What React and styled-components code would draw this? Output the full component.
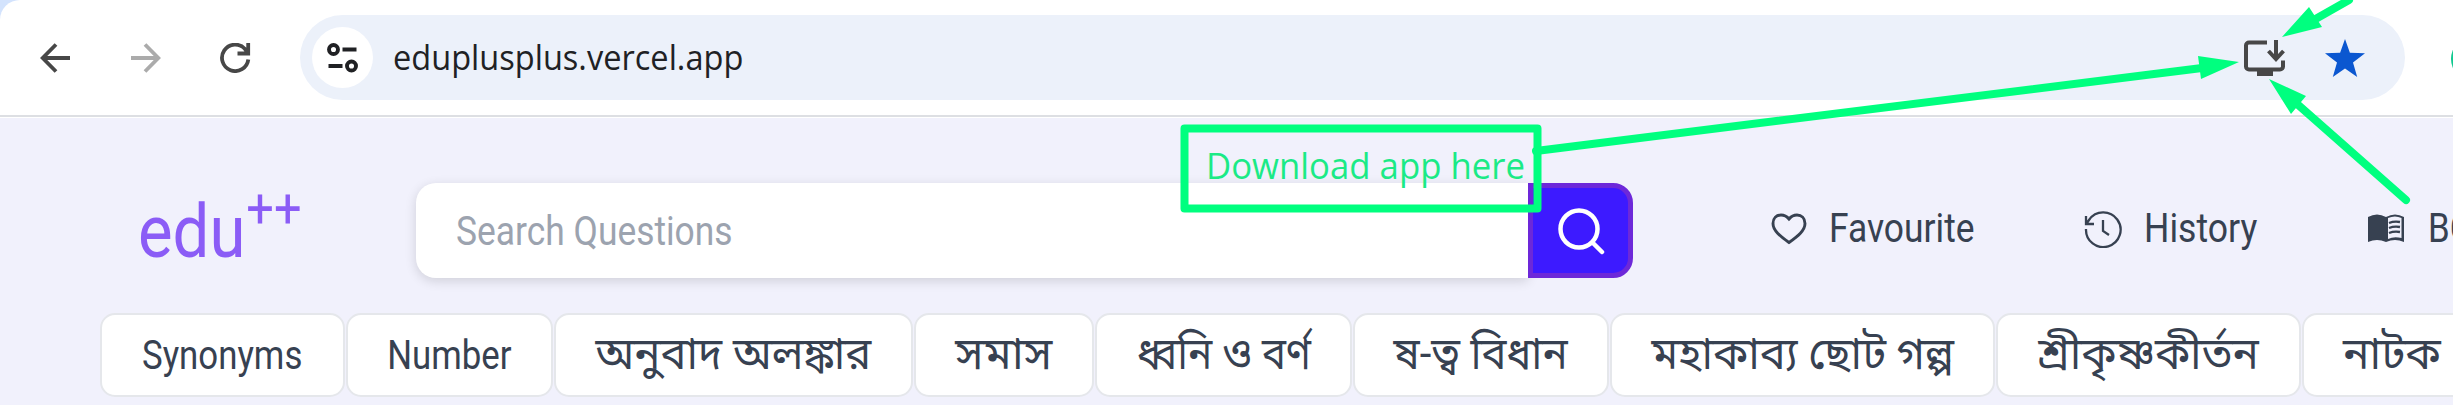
import React from 'react';
import styled, { createGlobalStyle } from 'styled-components';

const Global = createGlobalStyle`
  * { box-sizing: border-box; }
  body { margin: 0; overflow: hidden; background: #f1f1fc; }
`;

const Page = styled.div`
  position: relative;
  width: 2453px;
  height: 405px;
  overflow: hidden;
  background: #f1f1fc;
  font-family: Roboto, 'Noto Sans Bengali', sans-serif;
  color: #374151;
`;
const Frame = styled.div`
  height: 118px;
  background: #d3e3fd;
`;
const Toolbar = styled.header`
  display: flex;
  align-items: center;
  height: 118px;
  padding-bottom: 1px;
  background: #fff;
  border-top-left-radius: 20px;
  box-shadow: inset 0 -1px 0 #fff, inset 0 -3px 0 #dddfe3;
`;
const NavIcons = styled.div`
  display: flex;
  width: 300px;
  flex: none;
  padding: 0 0 1px 40px;
  gap: 59px;
  svg { display: block; }
`;
const Address = styled.div`
  display: flex;
  align-items: center;
  width: 2105px;
  height: 85px;
  flex: none;
  padding: 0 40px 0 12px;
  margin-bottom: 2px;
  border-radius: 43px;
  background: #ecf1fa;
`;
const SiteInfo = styled.div`
  display: grid;
  place-items: center;
  width: 61px;
  height: 61px;
  border-radius: 50%;
  background: #fff;
`;
const Url = styled.span`
  flex: 1;
  margin: 0 0 2px 20px;
  font: 400 35px/60px 'Open Sans', sans-serif;
  color: #202124;
  white-space: nowrap;
  transform: scaleX(0.93);
  transform-origin: left center;
`;
const AddressIcons = styled.div`
  display: flex;
  align-items: center;
  gap: 40px;
`;
const Avatar = styled.div`
  flex: none;
  width: 44px;
  height: 44px;
  margin-left: 46px;
  border-radius: 50%;
  background: #10c98f;
`;
const Header = styled.div`
  display: flex;
  height: 95px;
  margin-top: 65px;
`;
const Label = styled.span`
  display: inline-block;
  font-size: ${p => p.$size || 40}px;
  line-height: 48px;
  white-space: nowrap;
  transform: scaleX(${p => p.$scale || 0.87});
  transform-origin: ${p => p.$origin || 'left'} center;
`;
const Logo = styled.div`
  width: 416px;
  flex: none;
  padding-left: 138px;
  color: #8b5cf6;
`;
const LogoText = styled(Label)`
  font-size: 75px;
  line-height: 96px;
  sup { margin-left: 1px; font-size: 56px; line-height: 0; vertical-align: 29px; }
`;
const Search = styled.div`
  display: flex;
  width: 1217px;
  flex: none;
`;
const Field = styled.div`
  flex: 1;
  display: flex;
  align-items: center;
  padding: 2px 0 0 40px;
  border-radius: 20px 0 0 20px;
  background: #fff;
  box-shadow: 0 3px 12px rgba(0, 0, 0, 0.14);
  color: #9ca3af;
`;
const SearchButton = styled.div`
  display: grid;
  place-items: center;
  width: 105px;
  position: relative;
  border: 5px solid #6d28d9;
  border-radius: 0 20px 20px 0;
  background: #3d1aff;
`;
const Links = styled.nav`
  display: flex;
  height: 91px;
  margin-left: 138px;
  align-items: center;
`;
const Link = styled.a`
  display: flex;
  align-items: center;
  flex: none;
  width: ${p => p.$w}px;
  svg { flex: none; margin-right: ${p => p.$gap}px; }
`;
const Tabs = styled.div`
  display: flex;
  gap: 1px;
  margin: 35px 0 0 100px;
`;
const Tab = styled.div`
  display: flex;
  justify-content: center;
  align-items: center;
  flex: none;
  width: ${p => p.$w}px;
  height: 84px;
  padding: ${p => (p.$raised ? '0 0 2px' : '1px 0 0')};
  border: 2px solid #e5e7eb;
  border-radius: 15px;
  background: #fff;
`;
const Notes = styled.svg`
  position: absolute;
  inset: 0;
`;
const NoteText = styled.div`
  position: absolute;
  left: 1206px;
  top: 138px;
  font: 400 36px/56px 'Open Sans', sans-serif;
  color: #1bea86;
  white-space: nowrap;
  transform: scaleX(0.965);
  transform-origin: left center;
`;

const tabs = [
  ['Synonyms', 245, 40, 0.87], ['Number', 207, 40, 0.87], ['অনুবাদ অলঙ্কার', 359, 44, 0.99], ['সমাস', 180, 44, 1.04],
  ['ধ্বনি ও বর্ণ', 257, 44, 0.915], ['ষ-ত্ব বিধান', 256, 44, 0.95], ['মহাকাব্য ছোট গল্প', 385, 44, 0.99],
  ['শ্রীকৃষ্ণকীর্তন', 305, 44, 0.99], ['নাটক', 180, 44, 1],
];

export default function App() {
  return (
    <Page>
      <Global />
      <Frame>
        <Toolbar>
          <NavIcons>
            <svg width="31" height="30" viewBox="0 0 31 30" fill="none" stroke="#474747" strokeWidth="3.8"><path d="M30 15H3M16 1.5 2.7 15 16 28.5" /></svg>
            <svg width="31" height="30" viewBox="0 0 31 30" fill="none" stroke="#ababab" strokeWidth="3.8"><path d="M1 15h27M15 1.5 28.300 15 15 28.500" /></svg>
            <svg width="32" height="30" viewBox="0 0 32 30" fill="none" stroke="#474747" strokeWidth="3.8"><path d="M28.300 16.500A13.200 13.200 0 1 1 25 6l3 4M28.200 0v10.500H17.500" /></svg>
          </NavIcons>
          <Address>
            <SiteInfo>
              <svg width="33" height="30" viewBox="0 0 33 30" fill="none" stroke="#202124" strokeWidth="3.900"><circle cx="7.500" cy="6.500" r="4.500" /><circle cx="25.500" cy="23" r="4.500" /><path d="M16.500 6.500h14M2.500 23h14" /></svg>
            </SiteInfo>
            <Url>eduplusplus.vercel.app</Url>
            <AddressIcons>
              <svg width="41" height="36" viewBox="0 0 41 36" fill="none" stroke="#474747" strokeWidth="4"><path d="M23 2.500H5a3 3 0 0 0-3 3v21a3 3 0 0 0 3 3h31a3 3 0 0 0 3-3v-6M32 0v18M24.500 11l7.500 8 7.500-8" /><path d="M13 30h16v6H13z" fill="#474747" stroke="none" /></svg>
              <svg width="40" height="38" viewBox="0 0 40 38" fill="#0b57d0"><path d="M20 0l4.900 13.700L40 14.200 28 23.500 32.200 38 20 29.500 7.800 38 12 23.500 0 14.200l15.100-.5z" /></svg>
            </AddressIcons>
          </Address>
          <Avatar />
        </Toolbar>
      </Frame>
      <Header>
        <Logo><LogoText>edu<sup>++</sup></LogoText></Logo>
        <Search>
          <Field><Label $scale={0.885}>Search Questions</Label></Field>
          <SearchButton>
            <svg width="48" height="48" viewBox="0 0 48 48" fill="none" stroke="#fff" strokeWidth="4.500" strokeLinecap="round"><circle cx="22" cy="22" r="18.500" /><path d="M36 36l9 9" /></svg>
          </SearchButton>
        </Search>
        <Links>
          <Link $w={313} $gap={22}>
            <svg width="36" height="32" viewBox="0 0 36 32" fill="none" stroke="#374151" strokeWidth="2.900"><path d="M18 29.500C9 23 2 17.500 2 10.500C2 5 5.500 2 10 2c3.500 0 6 1.500 8 4C20 3.500 22.500 2 26 2c4.500 0 8 3 8 8.500C34 17.500 27 23 18 29.500z" /></svg>
            <Label $scale={0.885}>Favourite</Label>
          </Link>
          <Link $w={283} $gap={22}>
            <svg width="38" height="38" viewBox="0 0 38 38" fill="none" stroke="#374151" strokeWidth="2.300"><path d="M2 19a17.300 17.300 0 1 0 3-9L2.500 13.500M2 6v8h8M19 10v11l6 4" /></svg>
            <Label $scale={0.89}>History</Label>
          </Link>
          <Link $w={120} $gap={23}>
            <svg width="38" height="30" viewBox="0 0 38 30"><path d="M1 3Q10-2 19 3Q28-2 37 3V28Q28 24 19 28Q10 24 1 28z" fill="#374151" /><path d="M21 4Q28 1 34.500 4V24Q27 22 21 25z" fill="#f1f1fc" /><path d="M22 9q5-2 11-1M22 14q5-2 11-1M22 19q5-2 11-1" fill="none" stroke="#374151" strokeWidth="2.400" /></svg>
            <Label>BCS</Label>
          </Link>
        </Links>
      </Header>
      <Tabs>
        {tabs.map(([text, width, size, scale]) => (
          <Tab key={text} $w={width} $raised={size > 40}><Label $origin="center" $size={size} $scale={scale}>{text}</Label></Tab>
        ))}
      </Tabs>
      <Notes width="2453" height="405" viewBox="0 0 2453 405" fill="none" stroke="#00ff7f" strokeWidth="8" strokeLinecap="round" strokeLinejoin="round">
        <rect x="1184.500" y="128.500" width="353" height="80" />
        <path d="M1536 151L2202 68M2349 0L2312 21M2406 200L2296 103" />
        <path d="M2239 62L2198 56 2201 79zM2282 37L2309 7 2322 27zM2269 79L2306 96 2291 114z" fill="#00ff7f" stroke="none" />
      </Notes>
      <NoteText>Download app here</NoteText>
    </Page>
  );
}
